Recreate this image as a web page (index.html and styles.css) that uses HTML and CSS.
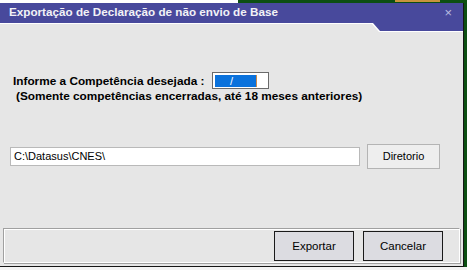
FILE: index.html
```html
<!DOCTYPE html>
<html lang="pt">
<head>
<meta charset="utf-8">
<title>Exportação</title>
<link rel="stylesheet" href="styles.css">
</head>
<body>
<div class="window">
  <div class="tb-edge">
    <div class="tb-fill">
      <span class="tb-title">Exportação de Declaração de não envio de Base</span>
      <span class="tb-close">×</span>
    </div>
  </div>
  <div class="content">
    <div class="row-comp">
      <span class="lbl">Informe a Competência desejada :</span>
      <span class="comp-box"><span class="sel">/</span><span class="caret"></span></span>
    </div>
    <div class="hint">(Somente competências encerradas, até 18 meses anteriores)</div>
    <div class="row-path">
      <span class="path-box">C:\Datasus\CNES\</span>
      <span class="btn-dir">Diretorio</span>
    </div>
    <div class="group">
      <span class="btn">Exportar</span>
      <span class="btn">Cancelar</span>
    </div>
  </div>
</div>
</body>
</html>
```
FILE: styles.css
```css
html, body { margin: 0; padding: 0; }
body {
  width: 467px;
  height: 270px;
  overflow: hidden;
  background:
    linear-gradient(#c8943c, #c8943c) 395px 0 / 45px 2px no-repeat,
    linear-gradient(to bottom, transparent 267px, #f4f4f4 267px),
    linear-gradient(to right, #ffffff 238px, #0c4f12 238px);
  font-family: "Liberation Sans", Arial, sans-serif;
  font-size: 11px;
  color: #000;
}
.window {
  margin-top: 3px;
  width: 463px;
  height: 263px;
  border-right: 1px solid #161616;
  border-bottom: 1px solid #161616;
  background: #e6e6e6;
  display: flex;
  flex-direction: column;
}
.tb-edge {
  height: 29px;
  background: #ffffff;
  clip-path: polygon(0 0, 100% 0, 100% 29px, 379px 29px, 372px 21px, 0 21px);
}
.tb-fill {
  height: 28px;
  background: #48499c;
  clip-path: polygon(0 0, 100% 0, 100% 28px, 380px 28px, 373px 20px, 0 20px);
  display: flex;
  justify-content: space-between;
  padding: 0 11px 0 9px;
}
.tb-title {
  line-height: 18px;
  font-weight: bold;
  font-size: 11.7px;
  color: #f2f2f6;
}
.tb-close {
  line-height: 20px;
  margin-top: 0;
  font-size: 13px;
  color: #b8bce0;
}
.content {
  flex: 1;
  display: flex;
  flex-direction: column;
}
.row-comp {
  margin-top: 40px;
  display: flex;
  align-items: center;
  padding-left: 13px;
  height: 17px;
}
.lbl {
  font-weight: bold;
  font-size: 11.8px;
  width: 199px;
}
.comp-box {
  width: 53px;
  height: 15px;
  border: 1px solid #6a6a6a;
  background: #fff;
  display: flex;
  align-items: center;
  padding-left: 2px;
  box-sizing: content-box;
}
.sel {
  width: 41px;
  height: 12px;
  background: #0a72dc;
  color: #fff;
  text-align: center;
  line-height: 12px;
  font-size: 11px;
  box-sizing: border-box;
  padding-right: 8px;
}
.caret {
  width: 1px;
  height: 12px;
  background: #c98a4c;
}
.hint {
  margin-top: 1px;
  padding-left: 16px;
  font-weight: bold;
  font-size: 11.8px;
  line-height: 13px;
}
.row-path {
  margin-top: 41px;
  display: flex;
  align-items: center;
  height: 25px;
  padding-left: 10px;
}
.path-box {
  width: 345px;
  height: 17px;
  border: 1px solid #b9b9b9;
  background: #fff;
  line-height: 17px;
  padding-left: 3px;
  box-sizing: content-box;
}
.btn-dir {
  margin-left: 7px;
  width: 71px;
  height: 23px;
  border: 1px solid #b4b4b4;
  background: #eeeeee;
  text-align: center;
  line-height: 23px;
}
.group {
  margin: 59px 0 0 3px;
  width: 457px;
  height: 35px;
  border-top: 1px solid #a0a0a0;
  border-left: 1px solid #a0a0a0;
  border-right: 1px solid #ffffff;
  border-bottom: 1px solid #ffffff;
  box-shadow: inset 1px 1px 0 #ffffff, 1px 1px 0 #a0a0a0;
  display: flex;
  justify-content: flex-end;
  align-items: center;
  gap: 9px;
  padding-right: 16px;
  box-sizing: border-box;
}
.btn {
  width: 78px;
  height: 28px;
  border: 1px solid #1a1a1a;
  background: #dcdce1;
  text-align: center;
  line-height: 28px;
  font-size: 11.5px;
}
```
